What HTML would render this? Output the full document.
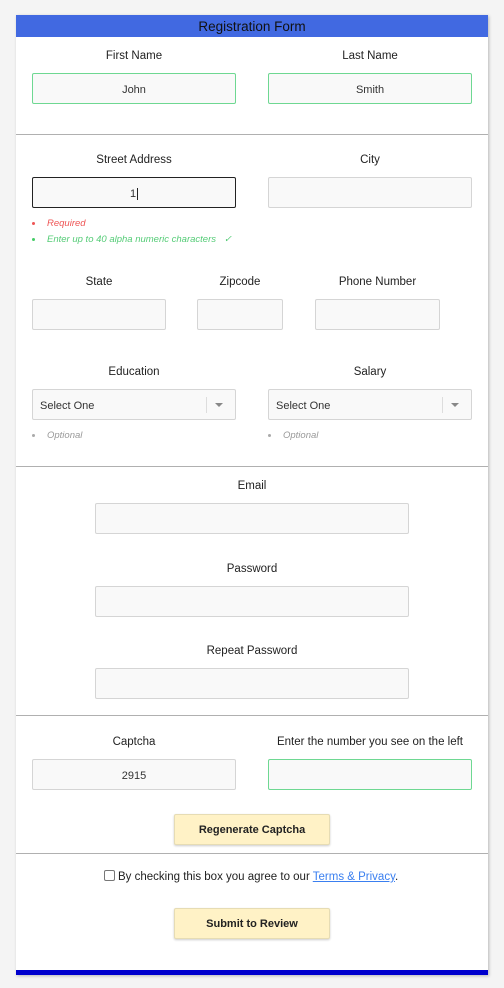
<!DOCTYPE html>
<html><head><style>
*{box-sizing:border-box;margin:0;padding:0}
body{width:504px;height:988px;background:#f4f4f4;font-family:"Liberation Sans",sans-serif;color:#333;position:relative;overflow:hidden}
.card{position:absolute;left:16px;top:15px;width:472px;height:960px;background:#fff;box-shadow:1px 1px 3px rgba(0,0,0,.25)}
.a{position:absolute}
.hdr{left:16px;top:15px;width:472px;height:22px;background:#4169e1;color:#111;font-size:13.5px;text-align:center;line-height:23px}
.lb{font-size:11.5px;text-align:center;color:#222;line-height:14px;margin-top:1px}
.in{background:#f9f9f9;border:1px solid #d5d5d5;border-radius:2px;height:31px;font-size:11px;text-align:center;line-height:32px;color:#333}
.g{border-color:#6ed892}
.hr{left:16px;width:472px;height:1px;background:#b0b0b0}
.sel{text-align:left;padding-left:7px}
.sep{position:absolute;top:7px;width:1px;height:16px;background:#ddd}
.arr{position:absolute;top:13px;width:0;height:0;border-left:4px solid transparent;border-right:4px solid transparent;border-top:4px solid #888}
.note{font-size:9.5px;font-style:italic;line-height:12px}
.dot{position:absolute;width:3px;height:3px;border-radius:50%}
.btn{background:#fff2c6;border:1px solid #e6dcb4;border-radius:2px;box-shadow:0 1px 2px rgba(0,0,0,.2);font-size:11px;font-weight:bold;text-align:center;line-height:31px;color:#222}
</style></head><body>
<div class="card"></div>
<div class="a hdr">Registration Form</div>

<div class="a lb" style="left:32px;width:204px;top:48px">First Name</div>
<div class="a lb" style="left:268px;width:204px;top:48px">Last Name</div>
<div class="a in g" style="left:32px;top:73px;width:204px">John</div>
<div class="a in g" style="left:268px;top:73px;width:204px">Smith</div>
<div class="a hr" style="top:134px"></div>

<div class="a lb" style="left:32px;width:204px;top:152px">Street Address</div>
<div class="a lb" style="left:268px;width:204px;top:152px">City</div>
<div class="a in" style="left:32px;top:177px;width:204px;border-color:#222">1<span style="border-left:1px solid #222;margin-left:1px"></span></div>
<div class="a in" style="left:268px;top:177px;width:204px"></div>
<div class="a dot" style="left:32px;top:222px;background:#e55"></div>
<div class="a note" style="left:47px;top:218px;color:#e55">Required</div>
<div class="a dot" style="left:32px;top:238px;background:#4c6"></div>
<div class="a note" style="left:47px;top:234px;color:#5c7">Enter up to 40 alpha numeric characters &nbsp;&nbsp;✓</div>

<div class="a lb" style="left:32px;width:134px;top:274px">State</div>
<div class="a lb" style="left:190px;width:100px;top:274px">Zipcode</div>
<div class="a lb" style="left:315px;width:125px;top:274px">Phone Number</div>
<div class="a in" style="left:32px;top:299px;width:134px"></div>
<div class="a in" style="left:197px;top:299px;width:86px"></div>
<div class="a in" style="left:315px;top:299px;width:125px"></div>

<div class="a lb" style="left:32px;width:204px;top:364px">Education</div>
<div class="a lb" style="left:268px;width:204px;top:364px">Salary</div>
<div class="a in sel" style="left:32px;top:389px;width:204px">Select One<div class="sep" style="left:173px"></div><div class="arr" style="left:182px"></div></div>
<div class="a in sel" style="left:268px;top:389px;width:204px">Select One<div class="sep" style="left:173px"></div><div class="arr" style="left:182px"></div></div>
<div class="a dot" style="left:32px;top:434px;background:#aaa"></div>
<div class="a note" style="left:47px;top:430px;color:#999">Optional</div>
<div class="a dot" style="left:268px;top:434px;background:#aaa"></div>
<div class="a note" style="left:283px;top:430px;color:#999">Optional</div>
<div class="a hr" style="top:466px"></div>

<div class="a lb" style="left:95px;width:314px;top:478px">Email</div>
<div class="a in" style="left:95px;top:503px;width:314px"></div>
<div class="a lb" style="left:95px;width:314px;top:561px">Password</div>
<div class="a in" style="left:95px;top:586px;width:314px"></div>
<div class="a lb" style="left:95px;width:314px;top:643px">Repeat Password</div>
<div class="a in" style="left:95px;top:668px;width:314px"></div>
<div class="a hr" style="top:715px"></div>

<div class="a lb" style="left:32px;width:204px;top:734px">Captcha</div>
<div class="a lb" style="left:268px;width:204px;top:734px">Enter the number you see on the left</div>
<div class="a in" style="left:32px;top:759px;width:204px">2915</div>
<div class="a in g" style="left:268px;top:759px;width:204px"></div>
<div class="a btn" style="left:174px;top:814px;width:156px;height:31px">Regenerate Captcha</div>
<div class="a hr" style="top:853px"></div>

<div class="a" style="left:104px;top:870px;width:11px;height:11px;border:1px solid #777;border-radius:2px;background:#fff"></div>
<div class="a lb" style="left:118px;top:869px;white-space:nowrap">By checking this box you agree to our <span style="color:#3a7ff0;text-decoration:underline">Terms &amp; Privacy</span>.</div>
<div class="a btn" style="left:174px;top:908px;width:156px;height:31px">Submit to Review</div>
<div class="a" style="left:16px;top:970px;width:472px;height:5px;background:#0000cd"></div>
</body></html>
